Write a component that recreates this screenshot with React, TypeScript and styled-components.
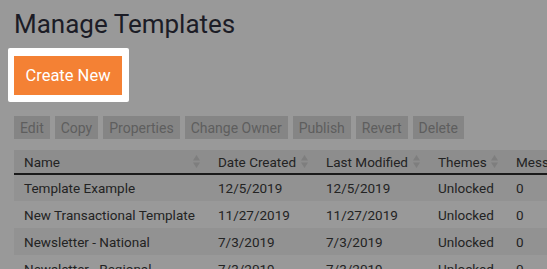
import styled, { createGlobalStyle } from "styled-components";

const GlobalStyle = createGlobalStyle`
  html, body {
    margin: 0;
    padding: 0;
    background: #999999;
    font-family: Roboto, "Liberation Sans", sans-serif;
    overflow: hidden;
  }
`;

interface Template {
  name: string;
  created: string;
  modified: string;
  themes: string;
  messages: number;
}

const templates: Template[] = [
  { name: "Template Example", created: "12/5/2019", modified: "12/5/2019", themes: "Unlocked", messages: 0 },
  { name: "New Transactional Template", created: "11/27/2019", modified: "11/27/2019", themes: "Unlocked", messages: 0 },
  { name: "Newsletter - National", created: "7/3/2019", modified: "7/3/2019", themes: "Unlocked", messages: 0 },
  { name: "Newsletter - Regional", created: "7/3/2019", modified: "7/3/2019", themes: "Unlocked", messages: 0 },
];

const actions = ["Edit", "Copy", "Properties", "Change Owner", "Publish", "Revert", "Delete"];

const columns = [
  { label: "Name", width: 194, sortable: true },
  { label: "Date Created", width: 108, sortable: true },
  { label: "Last Modified", width: 112, sortable: true },
  { label: "Themes", width: 78, sortable: true },
  { label: "Messages", width: 100, sortable: false },
];

function SortIcon() {
  return (
    <svg width="7" height="13" viewBox="0 0 7 13">
      <path d="M3.5 0 L7 5.5 L0 5.5 Z" fill="#7e7e7e" />
      <path d="M3.5 13 L7 7.5 L0 7.5 Z" fill="#7e7e7e" />
    </svg>
  );
}

export default function App() {
  return (
    <Page>
      <GlobalStyle />
      <Title>Manage Templates</Title>
      <Spotlight>
        <CreateButton>Create New</CreateButton>
      </Spotlight>
      <Toolbar>
        {actions.map((a) => (
          <ActionButton key={a}>{a}</ActionButton>
        ))}
      </Toolbar>
      <Table>
        <colgroup>
          {columns.map((c) => (
            <col key={c.label} style={{ width: c.width }} />
          ))}
        </colgroup>
        <thead>
          <tr>
            {columns.map((c) => (
              <Th key={c.label}>
                <HeadInner>
                  <span>{c.label}</span>
                  {c.sortable && <SortIcon />}
                </HeadInner>
              </Th>
            ))}
          </tr>
        </thead>
        <tbody>
          {templates.map((t) => (
            <Row key={t.name}>
              <Td>{t.name}</Td>
              <Td>{t.created}</Td>
              <Td>{t.modified}</Td>
              <Td>{t.themes}</Td>
              <Td>{t.messages}</Td>
            </Row>
          ))}
        </tbody>
      </Table>
    </Page>
  );
}

const Page = styled.div`
  padding: 8px 0 0 14px;
  width: 600px;
`;

const Title = styled.h1`
  margin: 0;
  font-size: 26px;
  font-weight: 400;
  color: #1c1c26;
  line-height: 32px;
`;

const Spotlight = styled.div`
  display: inline-block;
  margin: 8px 0 0 -6px;
  padding: 8px 7px 7px 6px;
  background: #ffffff;
  border-radius: 2px;
`;

const CreateButton = styled.button`
  display: block;
  width: 108px;
  height: 39px;
  border: none;
  background: #f48134;
  color: #ffffff;
  font-family: Roboto, "Liberation Sans", sans-serif;
  font-size: 16.5px;
  padding: 0;
  cursor: pointer;
`;

const Toolbar = styled.div`
  display: flex;
  gap: 5px;
  margin-top: 14px;
`;

const ActionButton = styled.button`
  height: 23px;
  padding: 0 6px;
  border: none;
  background: #858585;
  color: #5e5e5e;
  font-family: Roboto, "Liberation Sans", sans-serif;
  font-size: 14px;
`;

const Table = styled.table`
  margin-top: 11px;
  border-collapse: collapse;
  table-layout: fixed;
  width: 592px;
  font-size: 13.5px;
  color: #232323;
`;

const Th = styled.th`
  height: 23px;
  padding: 0 8px 0 10px;
  background: #8d8d8d;
  border-bottom: 2px solid #1a1a1a;
  font-weight: 400;
  text-align: left;
  white-space: nowrap;
`;

const HeadInner = styled.div`
  display: flex;
  align-items: center;
  justify-content: space-between;
`;

const Row = styled.tr`
  height: 27px;
  &:nth-child(odd) {
    background: #929292;
  }
`;

const Td = styled.td`
  padding: 0 10px;
  white-space: nowrap;
  overflow: hidden;
`;
